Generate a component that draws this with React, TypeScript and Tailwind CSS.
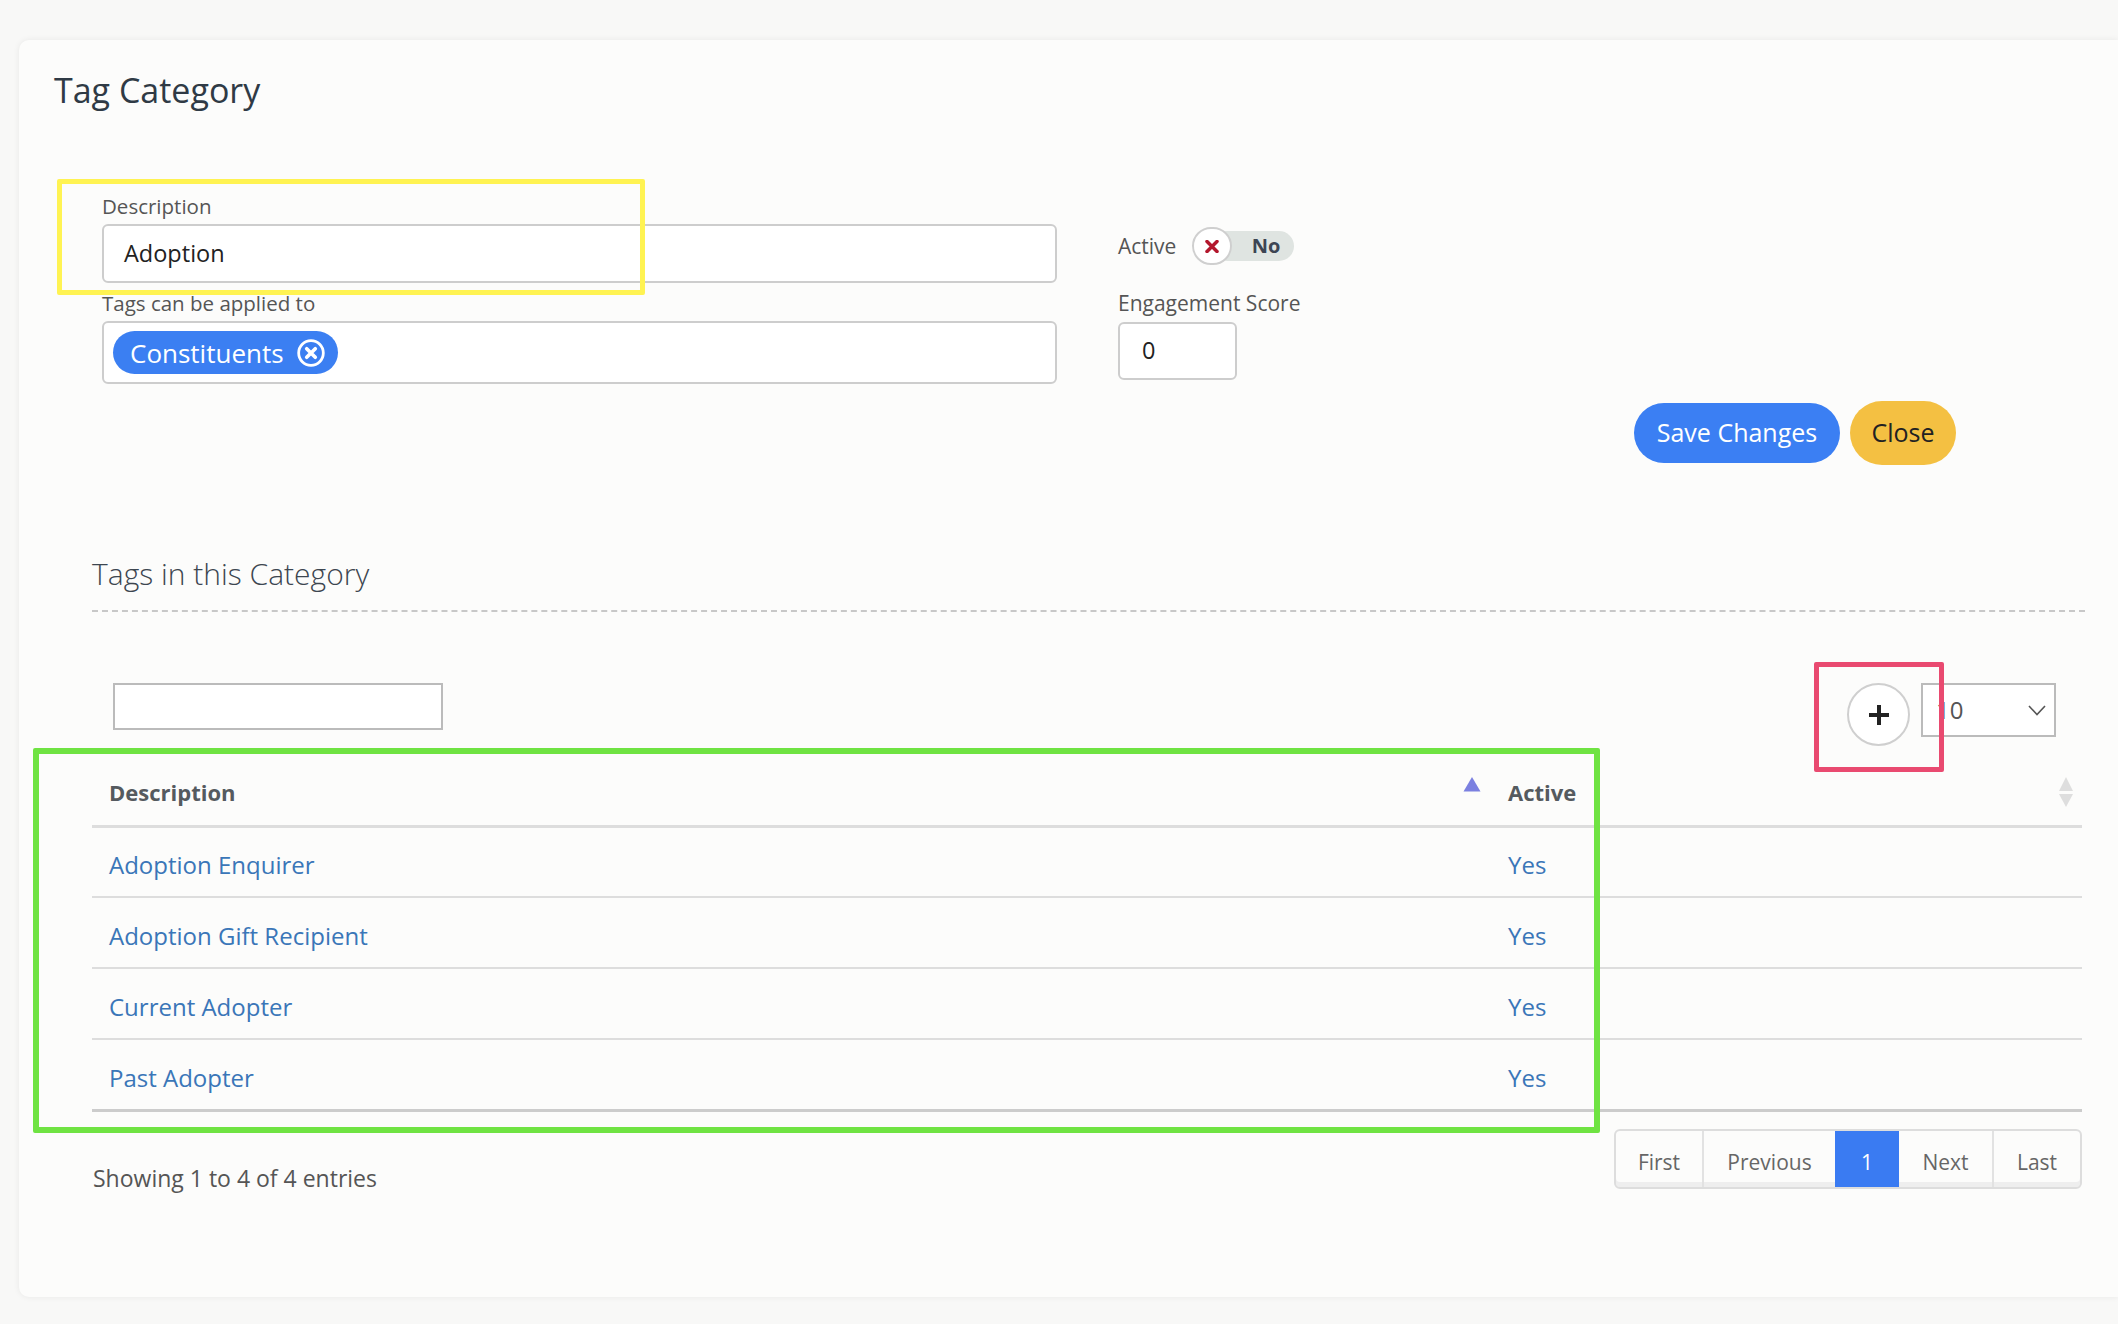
import React from "react";

const tags = [
  { name: "Adoption Enquirer", active: "Yes" },
  { name: "Adoption Gift Recipient", active: "Yes" },
  { name: "Current Adopter", active: "Yes" },
  { name: "Past Adopter", active: "Yes" },
];

function Toggle() {
  return (
    <div className="relative h-[38px] w-[102px]">
      <div className="absolute left-[20px] top-[4px] flex h-[30px] w-[82px] items-center justify-end rounded-full bg-[#dfe4e1] pr-[14px]">
        <span className="text-[20px] font-bold leading-none text-[#3d4553]">No</span>
      </div>
      <div className="absolute left-0 top-0 flex h-[38px] w-[40px] items-center justify-center rounded-full border-2 border-[#cfcfcf] bg-white">
        <svg width="14" height="13" viewBox="0 0 14 13">
          <path d="M2 1.5 12 11.5M12 1.5 2 11.5" stroke="#b3172d" strokeWidth="3.5" strokeLinecap="round" />
        </svg>
      </div>
    </div>
  );
}

function Chip({ label }: { label: string }) {
  return (
    <span className="inline-flex h-[43px] items-center gap-[12px] rounded-full bg-[#3b7ff2] pl-[17px] pr-[12px] text-[26px] leading-none text-white">
      {label}
      <svg width="30" height="30" viewBox="0 0 28 28">
        <circle cx="14" cy="14" r="11.5" fill="none" stroke="white" strokeWidth="2.6" />
        <path d="M10 10 18 18M18 10 10 18" stroke="white" strokeWidth="3.4" strokeLinecap="round" />
      </svg>
    </span>
  );
}

function SortBoth() {
  return (
    <svg width="16" height="32" viewBox="0 0 16 32">
      <path d="M8 1 15 15H1Z" fill="#dedede" />
      <path d="M8 31 15 18H1Z" fill="#dedede" />
    </svg>
  );
}

export default function App() {
  return (
    <div className="relative h-[1324px] w-[2118px] overflow-hidden bg-[#f8f8f7] font-['Open_Sans',sans-serif] text-[#333]">
      <div className="pl-[19px] pt-[40px]">
        <div className="h-[1257px] w-[2099px] rounded-l-[10px] bg-[#fcfcfb] pt-[30px] shadow-[0_0_6px_rgba(0,0,0,0.07)]">
          <h1 className="pl-[35px] text-[34px] font-normal leading-[40px] text-[#2f3a45]">Tag Category</h1>

          {/* form */}
          <div className="mt-[84px] flex items-start pl-[83px]">
            <div className="w-[955px]">
              <label className="mb-[6px] block text-[20.5px] leading-[24px] text-[#555]">Description</label>
              <div className="flex h-[59px] items-center rounded-[6px] border-2 border-[#cdcdcd] bg-white pl-[20px] text-[23.5px] text-[#222]">
                Adoption
              </div>
              <label className="mb-[6px] mt-[8px] block text-[20.5px] leading-[24px] text-[#555]">Tags can be applied to</label>
              <div className="flex h-[63px] items-center rounded-[6px] border-2 border-[#cdcdcd] bg-white pl-[9px]">
                <Chip label="Constituents" />
              </div>
            </div>
            <div className="ml-[61px] mt-[33px]">
              <div className="flex items-center gap-[16px]">
                <span className="text-[21px] leading-[24px] text-[#555]">Active</span>
                <Toggle />
              </div>
              <label className="mt-[26px] block text-[21px] leading-[24px] text-[#555]">Engagement Score</label>
              <div className="mt-[7px] flex h-[58px] w-[119px] items-center rounded-[6px] border-2 border-[#cdcdcd] bg-white pl-[22px] text-[23.5px] text-[#222]">
                0
              </div>
            </div>
          </div>

          <div className="mt-[17px] flex h-[64px] items-center justify-end gap-[10px] pr-[162px]">
            <button className="h-[60px] w-[206px] rounded-full bg-[#3b7ff3] text-[25px] text-white">Save Changes</button>
            <button className="h-[64px] w-[106px] rounded-full bg-[#f4c042] text-[25px] text-[#222]">Close</button>
          </div>

          {/* tags list */}
          <div className="ml-[73px] mt-[91px] w-[1993px]">
            <h2 className="text-[30px] font-light leading-[35px] text-[#3d4650]">Tags in this Category</h2>
            <div className="mt-[19px] border-t-2 border-dashed border-[#c8c8c8]" />

            <div className="mt-[71px] flex items-start justify-between pl-[21px] pr-[29px]">
              <input className="h-[47px] w-[330px] border-2 border-[#bbb] bg-white outline-none" />
              <div className="flex items-start gap-[11px]">
                <button className="flex h-[63px] w-[63px] items-center justify-center rounded-full border-2 border-[#cfcfcf] bg-white">
                  <svg width="22" height="22" viewBox="0 0 22 22">
                    <path d="M11 1V21M1 11H21" stroke="#222" strokeWidth="4" />
                  </svg>
                </button>
                <div className="flex h-[54px] w-[135px] items-center justify-between border-2 border-[#bbb] bg-white pl-[13px] pr-[8px] text-[24px] text-[#555]">
                  <span>10</span>
                  <svg width="18" height="11" viewBox="0 0 18 11">
                    <path d="M1 1 9 9.5 17 1" fill="none" stroke="#555" strokeWidth="1.6" />
                  </svg>
                </div>
              </div>
            </div>

            <table className="mt-[14px] w-[1990px] border-collapse text-left">
              <thead>
                <tr className="h-[66px] border-b-[3px] border-[#ddd] text-[22px] font-bold text-[#555a5f]">
                  <th className="relative w-[1403px] pl-[17px]">
                    Description
                    <svg className="absolute right-[14px] top-[17px]" width="18" height="15" viewBox="0 0 18 15">
                      <path d="M9 0 17.5 14.5H0.5Z" fill="#7b80e0" />
                    </svg>
                  </th>
                  <th className="relative pl-[13px]">
                    Active
                    <span className="absolute right-[8px] top-[16px]">
                      <SortBoth />
                    </span>
                  </th>
                </tr>
              </thead>
              <tbody>
                {tags.map((t, i) => (
                  <tr
                    key={t.name}
                    className={`h-[71px] text-[24px] text-[#3a76b8] ${
                      i === tags.length - 1 ? "border-b-[3px] border-[#ccc]" : "border-b-2 border-[#ddd]"
                    }`}
                  >
                    <td className="pl-[17px] pt-[7px]">{t.name}</td>
                    <td className="pl-[13px] pt-[7px]">{t.active}</td>
                  </tr>
                ))}
              </tbody>
            </table>

            <div className="mt-[17px] flex w-[1990px] items-start justify-between">
              <p className="pl-[1px] pt-[35px] text-[23px] leading-[28px] text-[#555]">Showing 1 to 4 of 4 entries</p>
              <div className="flex h-[60px] overflow-hidden rounded-[6px] border-2 border-[#ddd] text-[21px] text-[#666] shadow-[inset_0_-5px_0_#eeeeee]">
                <span className="flex w-[88px] items-center justify-center border-r-2 border-[#e2e2e2] pt-[9px]">First</span>
                <span className="flex w-[131px] items-center justify-center pt-[9px]">Previous</span>
                <span className="flex w-[64px] items-center justify-center bg-[#3a7bf2] pt-[9px] text-white">1</span>
                <span className="flex w-[95px] items-center justify-center border-r-2 border-[#e2e2e2] pt-[9px]">Next</span>
                <span className="flex w-[86px] items-center justify-center pt-[9px]">Last</span>
              </div>
            </div>
          </div>
        </div>
      </div>

      {/* annotation boxes */}
      <div className="absolute left-[57px] top-[179px] h-[116px] w-[588px] rounded-[2px] border-[5px] border-[#fff352]" />
      <div className="absolute left-[33px] top-[748px] h-[385px] w-[1567px] rounded-[2px] border-[6px] border-[#6fe342]" />
      <div className="absolute left-[1814px] top-[662px] h-[110px] w-[130px] rounded-[2px] border-[5px] border-[#e94a70]" />
    </div>
  );
}
